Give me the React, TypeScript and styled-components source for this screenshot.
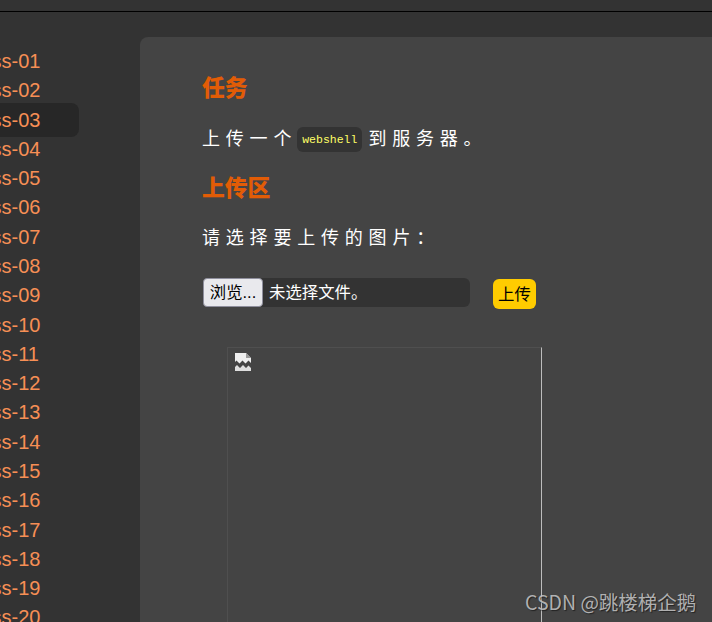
import * as React from 'react';
import styled, { createGlobalStyle } from 'styled-components';

const GlobalStyle = createGlobalStyle`
  html, body {
    margin: 0;
    padding: 0;
    height: 100%;
    overflow: hidden;
    background: #333333;
  }
  body {
    font-family: "Liberation Sans", "Noto Sans CJK SC", sans-serif;
  }
`;

const Page = styled.div`
  width: 712px;
  height: 622px;
  overflow: hidden;
  position: relative;
  background: #333333;
`;

const TopBar = styled.div`
  height: 11px;
  background: #333333;
  border-bottom: 1px solid #000000;
`;

const Body = styled.div`
  display: flex;
  align-items: flex-start;
  padding-top: 25px;
`;

const Sidebar = styled.ul`
  list-style: none;
  flex: none;
  width: 120px;
  margin: 7px 61px 0 -41px;
  padding: 0;
`;

const NavItem = styled.li<{ $active?: boolean }>`
  box-sizing: border-box;
  height: 34px;
  margin-bottom: -4.72px;
  padding-left: 8px;
  border-radius: 8px;
  font-size: 20px;
  line-height: 34px;
  color: #f78f55;
  background: ${(props) => (props.$active ? '#272727' : 'transparent')};
`;

const Panel = styled.main`
  flex: none;
  box-sizing: border-box;
  width: 640px;
  height: 640px;
  padding: 33px 0 0 63px;
  border-radius: 8px 0 0 0;
  background: #444444;
`;

const Heading = styled.h3`
  margin: 0 0 0 -1px;
  font-family: "Noto Sans CJK SC", sans-serif;
  font-size: 22.8px;
  line-height: 34px;
  font-weight: 900;
  color: #e25c06;
`;

const Paragraph = styled.p<{ $top: number }>`
  display: flex;
  align-items: center;
  margin: ${(props) => props.$top}px 0 21px -1px;
  height: 25px;
  font-family: "Noto Sans CJK SC", sans-serif;
  font-size: 18px;
  letter-spacing: 5.8px;
  color: #ffffff;
  white-space: nowrap;
`;

const Code = styled.code`
  box-sizing: border-box;
  height: 25px;
  margin: 6px 6px 0 0;
  padding: 0 5px;
  border-radius: 6px;
  background: #333333;
  font-family: "Liberation Mono", monospace;
  font-size: 11.5px;
  line-height: 26px;
  letter-spacing: 0;
  color: #ffff66;
`;

const UploadRow = styled.form`
  display: flex;
  align-items: flex-start;
  margin-top: 30px;
`;

const FileField = styled.div`
  display: flex;
  align-items: center;
  width: 267px;
  height: 29px;
  border-radius: 6px;
  background: #333333;
  font-size: 16.4px;
  line-height: 27px;
  color: #ffffff;
`;

const BrowseButton = styled.span`
  box-sizing: border-box;
  width: 60px;
  height: 29px;
  margin-right: 6px;
  border: 1px solid #8f8f9d;
  border-radius: 4px;
  background: #e9e9ed;
  color: #000000;
  font-size: 16.4px;
  line-height: 27px;
  text-align: center;
`;

const SubmitButton = styled.button`
  width: 43px;
  height: 30px;
  margin: 1px 0 0 23px;
  padding: 0 0 2px;
  border: none;
  border-radius: 6px;
  background: #ffcc00;
  color: #000000;
  font-family: "Liberation Sans", "Noto Sans CJK SC", sans-serif;
  font-size: 16.4px;
`;

const Preview = styled.div`
  box-sizing: border-box;
  width: 315px;
  height: 400px;
  margin: 38px 0 0 24px;
  padding: 5px 0 0 7px;
  border-top: 1px solid #4f4f4f;
  border-left: 1px solid #4f4f4f;
  border-right: 1px solid #bdbdbd;
`;

const BrokenIcon = styled.svg`
  display: block;
  width: 16px;
  height: 18px;
`;

const Watermark = styled.div`
  position: absolute;
  left: 525px;
  top: 589px;
  font-family: "Noto Sans CJK SC", sans-serif;
  font-size: 19.5px;
  line-height: 25px;
  color: rgba(200, 200, 200, 0.85);
  text-shadow: 1px 1px 1px rgba(0, 0, 0, 0.5);
  white-space: nowrap;
`;

const levels = Array.from({ length: 20 }, (_, i) => String(i + 1).padStart(2, '0'));

export default function App() {
  return (
    <Page>
      <GlobalStyle />
      <TopBar />
      <Body>
        <Sidebar>
          {levels.map((level) => (
            <NavItem key={level} $active={level === '03'}>
              Pass-{level}
            </NavItem>
          ))}
        </Sidebar>
        <Panel>
          <Heading>任务</Heading>
          <Paragraph $top={20}>
            上传一个<Code>webshell</Code>到服务器。
          </Paragraph>
          <Heading>上传区</Heading>
          <Paragraph $top={19}>请选择要上传的图片：</Paragraph>
          <UploadRow>
            <FileField>
              <BrowseButton>浏览...</BrowseButton>
              未选择文件。
            </FileField>
            <SubmitButton type="button">上传</SubmitButton>
          </UploadRow>
          <Preview>
            <BrokenIcon viewBox="0 0 16 18">
              <path d="M0 0h11l5 5v5l-2.5-2.5-3 3-3-3-3 3-3-3-2 2z" fill="#efefef" />
              <path d="M11 0v5h5" fill="#9a9a9a" />
              <path d="M0 14l2-2 3 3 3-3 3 3 2.5-2.5 2.5 2.5v5H0z" fill="#dedede" />
            </BrokenIcon>
          </Preview>
        </Panel>
      </Body>
      <Watermark>CSDN @跳楼梯企鹅</Watermark>
    </Page>
  );
}
